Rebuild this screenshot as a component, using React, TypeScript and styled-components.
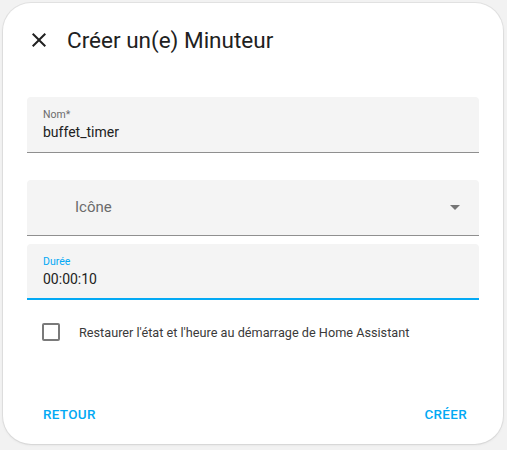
import React from "react";
import styled, { createGlobalStyle } from "styled-components";

const GlobalStyle = createGlobalStyle`
  html, body {
    margin: 0;
    padding: 0;
    background: #f2f2f2;
  }
  body {
    font-family: Roboto, "Noto Sans", "Liberation Sans", sans-serif;
    -webkit-font-smoothing: antialiased;
  }
`;

const Page = styled.div`
  padding: 3px 0 0 3px;
  width: 507px;
  height: 450px;
  box-sizing: border-box;
`;

const Dialog = styled.div`
  width: 500px;
  height: 441px;
  box-sizing: border-box;
  background: #ffffff;
  border-radius: 28px;
  box-shadow: 0 0 0 1px rgba(0, 0, 0, 0.06), 0 1px 3px rgba(0, 0, 0, 0.08);
  display: flex;
  flex-direction: column;
`;

const Header = styled.div`
  display: flex;
  align-items: center;
  gap: 16px;
  padding: 25px 24px 0 24px;
  height: 24px;
  box-sizing: content-box;
`;

const CloseButton = styled.button`
  width: 24px;
  height: 24px;
  padding: 0;
  border: none;
  background: none;
  color: #212121;
  display: flex;
  align-items: center;
  justify-content: center;
  cursor: pointer;
  svg {
    display: block;
  }
`;

const Title = styled.h2`
  margin: 0;
  font-size: 22.5px;
  line-height: 24px;
  font-weight: 400;
  color: #212121;
`;

const Content = styled.div`
  padding: 45px 24px 0 24px;
  display: flex;
  flex-direction: column;
`;

const Field = styled.div<{ $focused?: boolean; $gap?: number }>`
  height: 56px;
  box-sizing: border-box;
  margin-top: ${(p) => p.$gap ?? 0}px;
  background: #f4f4f4;
  border-radius: 4px 4px 0 0;
  border-bottom: ${(p) => (p.$focused ? "2px solid #03a9f4" : "1px solid #8f8f8f")};
  padding: 12px 16px 0 16px;
  display: flex;
  flex-direction: column;
`;

const FloatingLabel = styled.span<{ $focused?: boolean }>`
  font-size: 10.5px;
  line-height: 12px;
  color: ${(p) => (p.$focused ? "#03a9f4" : "#6b6b6b")};
`;

const Value = styled.span`
  margin-top: 1px;
  font-size: 14px;
  line-height: 20px;
  color: #212121;
`;

const SelectField = styled.div<{ $gap?: number }>`
  height: 56px;
  box-sizing: border-box;
  margin-top: ${(p) => p.$gap ?? 0}px;
  background: #f4f4f4;
  border-radius: 4px 4px 0 0;
  border-bottom: 1px solid #8f8f8f;
  padding: 0 12px 2px 48px;
  display: flex;
  align-items: center;
  justify-content: space-between;
`;

const Placeholder = styled.span`
  font-size: 15px;
  line-height: 20px;
  color: #6b6b6b;
`;

const CheckRow = styled.label`
  display: flex;
  align-items: center;
  gap: 19px;
  margin-top: 23px;
  padding-left: 15px;
  height: 18px;
`;

const CheckBox = styled.span`
  width: 18px;
  height: 18px;
  box-sizing: border-box;
  border: 2px solid #7a7a7a;
  border-radius: 2px;
  flex: none;
`;

const CheckText = styled.span`
  font-size: 12.7px;
  line-height: 18px;
  color: #3a3a3a;
  margin-top: 1px;
`;

const Actions = styled.div`
  margin-top: auto;
  padding: 0 36px 22px 40px;
  display: flex;
  justify-content: space-between;
  align-items: center;
`;

const TextButton = styled.button`
  border: none;
  background: none;
  padding: 0;
  font-family: inherit;
  font-size: 13.5px;
  font-weight: 500;
  letter-spacing: 0.3px;
  line-height: 16px;
  text-transform: uppercase;
  color: #03a9f4;
  cursor: pointer;
`;

export default function App() {
  return (
    <>
      <GlobalStyle />
      <Page>
        <Dialog>
          <Header>
            <CloseButton aria-label="Fermer">
              <svg width="24" height="24" viewBox="0 0 24 24">
                <path
                  fill="currentColor"
                  d="M19,6.41L17.59,5L12,10.59L6.41,5L5,6.41L10.59,12L5,17.59L6.41,19L12,13.41L17.59,19L19,17.59L13.41,12L19,6.41Z"
                />
              </svg>
            </CloseButton>
            <Title>Créer un(e) Minuteur</Title>
          </Header>
          <Content>
            <Field>
              <FloatingLabel>Nom*</FloatingLabel>
              <Value>buffet_timer</Value>
            </Field>
            <SelectField $gap={27}>
              <Placeholder>Icône</Placeholder>
              <svg width="24" height="24" viewBox="0 0 24 24">
                <path fill="#757575" d="M7,10L12,15L17,10H7Z" />
              </svg>
            </SelectField>
            <Field $focused $gap={8}>
              <FloatingLabel $focused>Durée</FloatingLabel>
              <Value>00:00:10</Value>
            </Field>
            <CheckRow>
              <CheckBox />
              <CheckText>Restaurer l'état et l'heure au démarrage de Home Assistant</CheckText>
            </CheckRow>
          </Content>
          <Actions>
            <TextButton>Retour</TextButton>
            <TextButton>Créer</TextButton>
          </Actions>
        </Dialog>
      </Page>
    </>
  );
}
